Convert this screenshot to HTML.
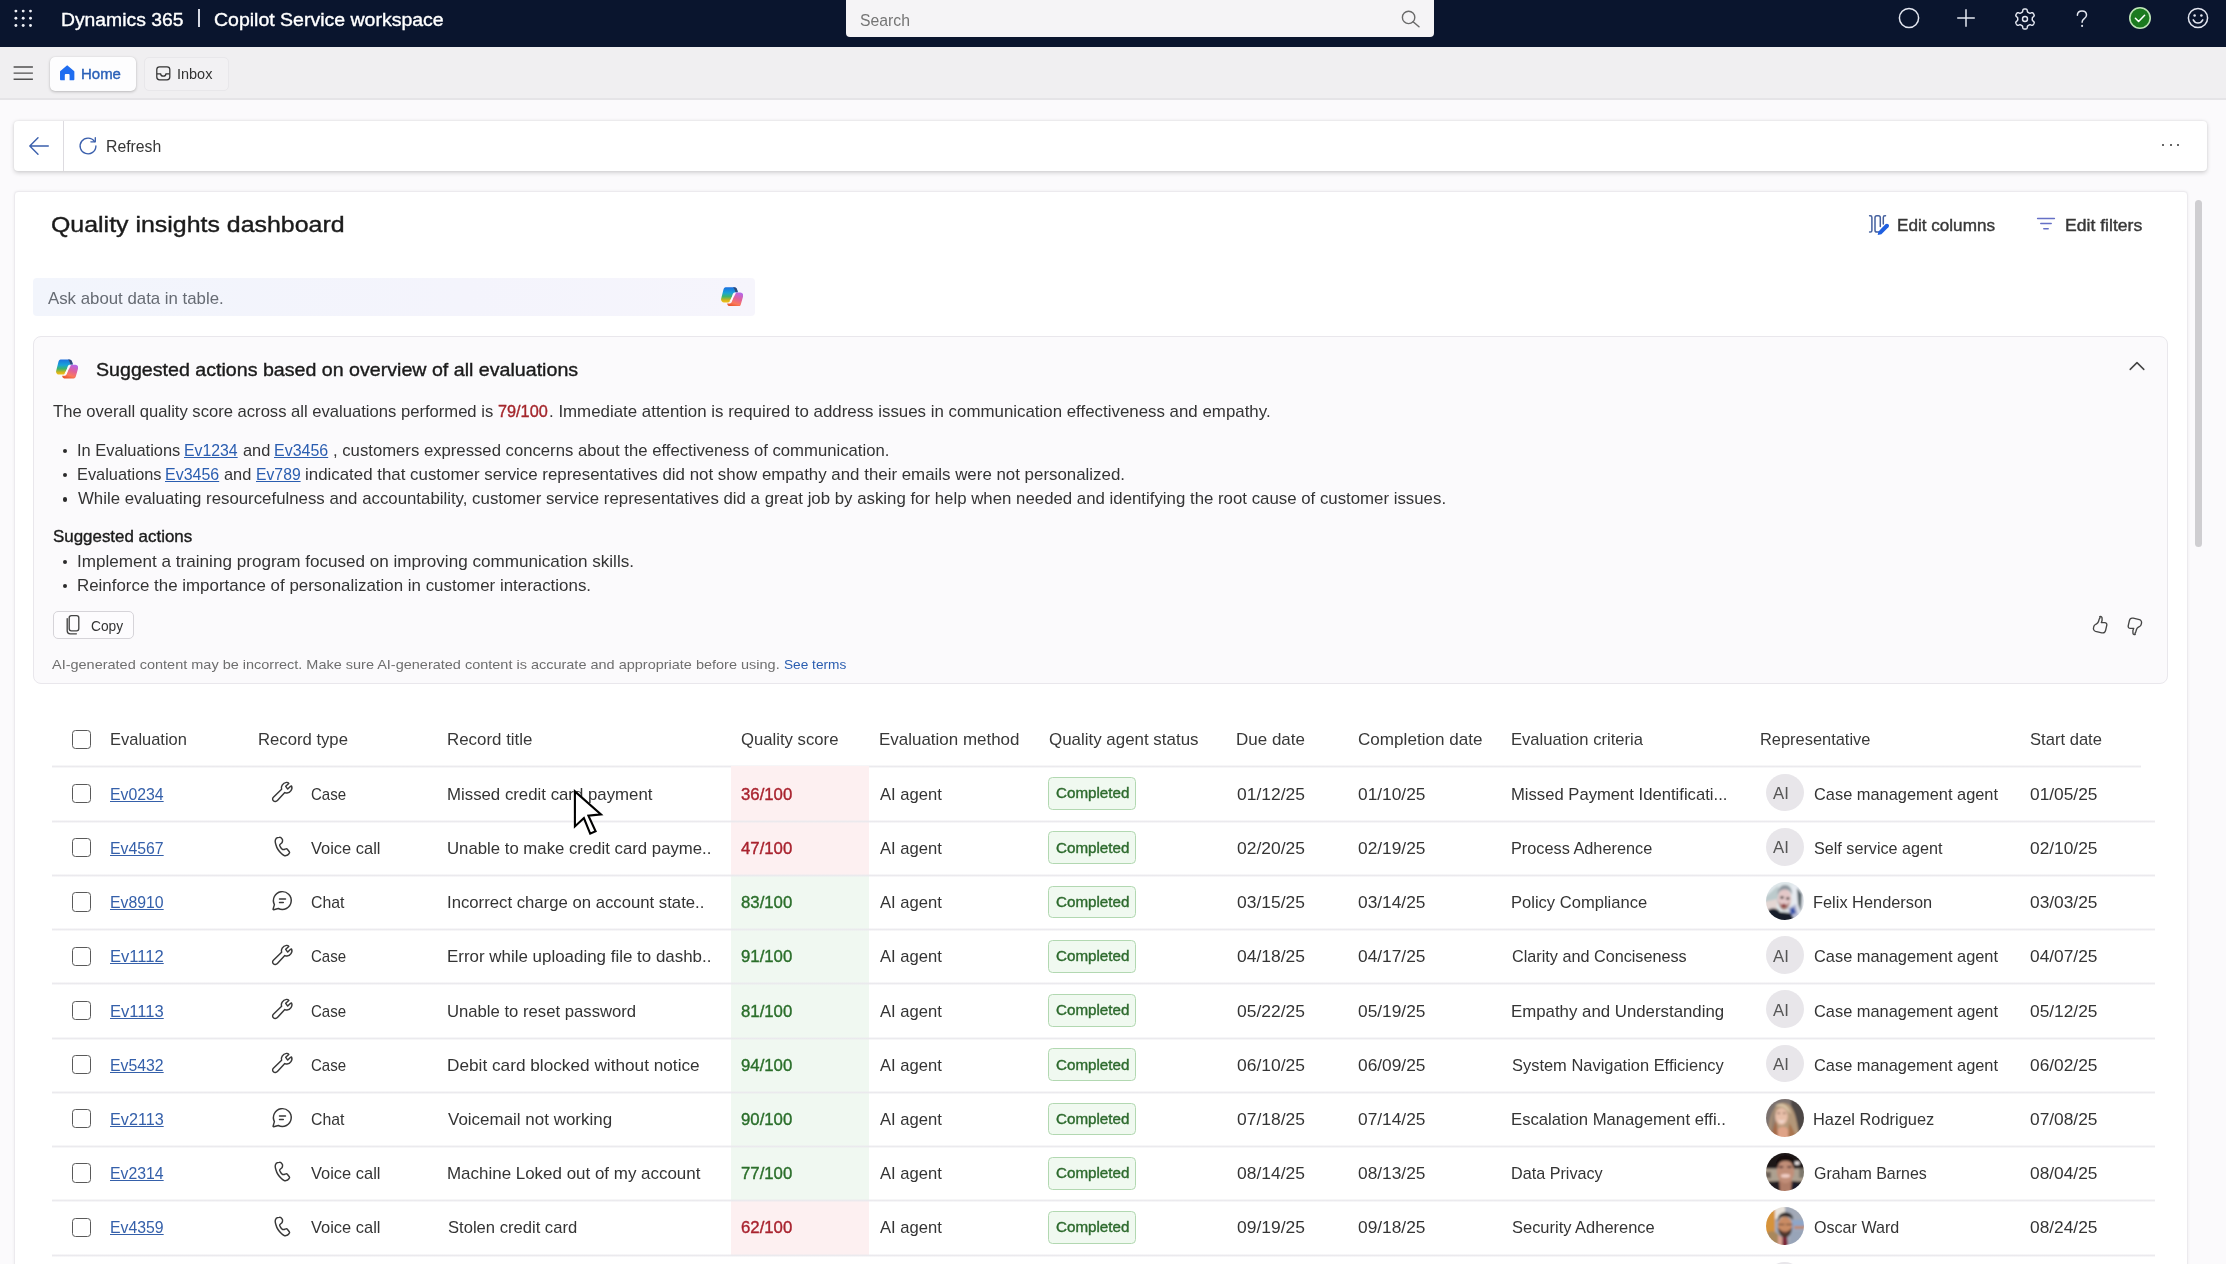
<!DOCTYPE html>
<html lang="en"><head><meta charset="utf-8"><title>Quality insights dashboard</title>
<style>
html,body{margin:0;padding:0;}
body{width:2226px;height:1264px;overflow:hidden;position:relative;background:#fbfafc;font-family:"Liberation Sans",sans-serif;}
#root{position:absolute;left:0;top:0;width:2226px;height:1264px;overflow:hidden;}
#root div,#root svg,#root span.t{position:absolute;}
span.t{white-space:pre;line-height:1;transform-origin:0 0;display:block;}
</style></head>
<body><div id="root">
<header>
<div style="left:0.00px;top:0.00px;width:2226.00px;height:47.00px;background:#0a152e;"></div>
<svg style="left:5.00px;top:0.00px" width="40.00" height="40.00" viewBox="0 0 40 40" ><circle cx="10.9" cy="11.1" r="1.45" fill="#eef0f7"/><circle cx="18.2" cy="11.1" r="1.45" fill="#eef0f7"/><circle cx="25.5" cy="11.1" r="1.45" fill="#eef0f7"/><circle cx="10.9" cy="18.3" r="1.45" fill="#eef0f7"/><circle cx="18.2" cy="18.3" r="1.45" fill="#eef0f7"/><circle cx="25.5" cy="18.3" r="1.45" fill="#eef0f7"/><circle cx="10.9" cy="25.5" r="1.45" fill="#eef0f7"/><circle cx="18.2" cy="25.5" r="1.45" fill="#eef0f7"/><circle cx="25.5" cy="25.5" r="1.45" fill="#eef0f7"/></svg>
<span class="t" style="left:61.37px;top:11.00px;font-size:18.8px;color:#ffffff;transform:scaleX(1.0285);-webkit-text-stroke:0.38px currentColor;">Dynamics 365</span>
<div style="left:198.30px;top:9.00px;width:1.60px;height:18.40px;background:#d5d9e4;"></div>
<span class="t" style="left:214.00px;top:11.00px;font-size:18.8px;color:#ffffff;transform:scaleX(1.0378);-webkit-text-stroke:0.38px currentColor;">Copilot Service workspace</span>
<div style="left:845.50px;top:0.00px;width:588.50px;height:37.40px;background:#f5f4f6;border-radius:0 0 4px 4px;"></div>
<span class="t" style="left:860.30px;top:12.00px;font-size:17.4px;color:#757575;transform:scaleX(0.9076);">Search</span>
<svg style="left:1399.50px;top:9.20px" width="21.00" height="18.60" viewBox="0 0 21 18.6" ><circle cx="8.6" cy="8.4" r="6.2" fill="none" stroke="#6a6a6a" stroke-width="1.4"/><path d="M13.100 12.800 L19 17.800" stroke="#6a6a6a" stroke-width="1.5" stroke-linecap="round"/></svg>
<svg style="left:1896.80px;top:6.40px" width="24.00" height="24.00" viewBox="0 0 24 24" ><circle cx="12" cy="12" r="9.6" fill="none" stroke="#e4e7f1" stroke-width="1.5"/></svg>
<svg style="left:1954.20px;top:5.80px" width="24.00" height="24.00" viewBox="0 0 24 24" ><path d="M12 3.3V20.7M3.2 12H20.8" stroke="#e4e7f1" stroke-width="1.5" fill="none"/></svg>
<svg style="left:2012.60px;top:6.50px" width="24.00" height="24.00" viewBox="0 0 24 24" ><path d="M12.00 2.00 L12.26 2.00 L12.52 2.02 L12.78 2.05 L13.04 2.09 L13.30 2.15 L13.54 2.25 L13.78 2.42 L13.98 2.69 L14.13 3.11 L14.24 3.64 L14.32 4.18 L14.41 4.60 L14.52 4.88 L14.66 5.06 L14.82 5.19 L14.98 5.30 L15.15 5.40 L15.32 5.49 L15.48 5.58 L15.65 5.68 L15.81 5.77 L15.98 5.87 L16.14 5.97 L16.31 6.07 L16.48 6.16 L16.68 6.22 L16.91 6.25 L17.21 6.21 L17.62 6.08 L18.12 5.88 L18.63 5.71 L19.07 5.63 L19.41 5.67 L19.67 5.79 L19.88 5.95 L20.06 6.14 L20.23 6.34 L20.38 6.56 L20.53 6.78 L20.66 7.00 L20.79 7.23 L20.90 7.46 L21.01 7.70 L21.11 7.95 L21.18 8.20 L21.21 8.46 L21.18 8.75 L21.05 9.06 L20.77 9.40 L20.36 9.76 L19.93 10.10 L19.62 10.38 L19.43 10.62 L19.34 10.84 L19.30 11.04 L19.29 11.23 L19.29 11.43 L19.30 11.62 L19.30 11.81 L19.30 12.00 L19.30 12.19 L19.30 12.38 L19.29 12.57 L19.29 12.77 L19.30 12.96 L19.34 13.16 L19.43 13.38 L19.62 13.62 L19.93 13.90 L20.36 14.24 L20.77 14.60 L21.05 14.94 L21.18 15.25 L21.21 15.54 L21.18 15.80 L21.11 16.05 L21.01 16.30 L20.90 16.54 L20.79 16.77 L20.66 17.00 L20.53 17.22 L20.38 17.44 L20.23 17.66 L20.06 17.86 L19.88 18.05 L19.67 18.21 L19.41 18.33 L19.07 18.37 L18.63 18.29 L18.12 18.12 L17.62 17.92 L17.21 17.79 L16.91 17.75 L16.68 17.78 L16.48 17.84 L16.31 17.93 L16.14 18.03 L15.98 18.13 L15.81 18.23 L15.65 18.32 L15.48 18.42 L15.32 18.51 L15.15 18.60 L14.98 18.70 L14.82 18.81 L14.66 18.94 L14.52 19.12 L14.41 19.40 L14.32 19.82 L14.24 20.36 L14.13 20.89 L13.98 21.31 L13.78 21.58 L13.54 21.75 L13.30 21.85 L13.04 21.91 L12.78 21.95 L12.52 21.98 L12.26 22.00 L12.00 22.00 L11.74 22.00 L11.48 21.98 L11.22 21.95 L10.96 21.91 L10.70 21.85 L10.46 21.75 L10.22 21.58 L10.02 21.31 L9.87 20.89 L9.76 20.36 L9.68 19.82 L9.59 19.40 L9.48 19.12 L9.34 18.94 L9.18 18.81 L9.02 18.70 L8.85 18.60 L8.68 18.51 L8.52 18.42 L8.35 18.32 L8.19 18.23 L8.02 18.13 L7.86 18.03 L7.69 17.93 L7.52 17.84 L7.32 17.78 L7.09 17.75 L6.79 17.79 L6.38 17.92 L5.88 18.12 L5.37 18.29 L4.93 18.37 L4.59 18.33 L4.33 18.21 L4.12 18.05 L3.94 17.86 L3.77 17.66 L3.62 17.44 L3.47 17.22 L3.34 17.00 L3.21 16.77 L3.10 16.54 L2.99 16.30 L2.89 16.05 L2.82 15.80 L2.79 15.54 L2.82 15.25 L2.95 14.94 L3.23 14.60 L3.64 14.24 L4.07 13.90 L4.38 13.62 L4.57 13.38 L4.66 13.16 L4.70 12.96 L4.71 12.77 L4.71 12.57 L4.70 12.38 L4.70 12.19 L4.70 12.00 L4.70 11.81 L4.70 11.62 L4.71 11.43 L4.71 11.23 L4.70 11.04 L4.66 10.84 L4.57 10.62 L4.38 10.38 L4.07 10.10 L3.64 9.76 L3.23 9.40 L2.95 9.06 L2.82 8.75 L2.79 8.46 L2.82 8.20 L2.89 7.95 L2.99 7.70 L3.10 7.46 L3.21 7.23 L3.34 7.00 L3.47 6.78 L3.62 6.56 L3.77 6.34 L3.94 6.14 L4.12 5.95 L4.33 5.79 L4.59 5.67 L4.93 5.63 L5.37 5.71 L5.88 5.88 L6.38 6.08 L6.79 6.21 L7.09 6.25 L7.32 6.22 L7.52 6.16 L7.69 6.07 L7.86 5.97 L8.02 5.87 L8.19 5.77 L8.35 5.68 L8.52 5.58 L8.68 5.49 L8.85 5.40 L9.02 5.30 L9.18 5.19 L9.34 5.06 L9.48 4.88 L9.59 4.60 L9.68 4.18 L9.76 3.64 L9.87 3.11 L10.02 2.69 L10.22 2.42 L10.46 2.25 L10.70 2.15 L10.96 2.09 L11.22 2.05 L11.48 2.02 L11.74 2.00Z" fill="none" stroke="#e4e7f1" stroke-width="1.45" stroke-linejoin="round"/><circle cx="12" cy="12" r="2.5" fill="none" stroke="#e4e7f1" stroke-width="1.45"/></svg>
<svg style="left:2070.00px;top:6.00px" width="24.00" height="24.00" viewBox="0 0 24 24" ><path d="M7.4 9.3C7.4 6.5 9.4 4.9 12 4.9s4.5 1.7 4.5 4.1c0 2-1.2 3-2.5 3.9-1.2.9-1.9 1.7-1.9 3.4" fill="none" stroke="#e4e7f1" stroke-width="1.5" stroke-linecap="round"/><circle cx="12.1" cy="19.9" r="1.05" fill="#e4e7f1"/></svg>
<svg style="left:2128.00px;top:6.40px" width="24.00" height="24.00" viewBox="0 0 24 24" ><circle cx="12" cy="12" r="10.2" fill="#1b7a1f" stroke="#bfe6b8" stroke-width="1.6"/><path d="M7.4 12.3l3.2 3.2 6-6.3" fill="none" stroke="#ffffff" stroke-width="1.55" stroke-linecap="round" stroke-linejoin="round"/></svg>
<svg style="left:2186.00px;top:6.40px" width="24.00" height="24.00" viewBox="0 0 24 24" ><circle cx="12" cy="12" r="9.6" fill="none" stroke="#e4e7f1" stroke-width="1.5"/><circle cx="8.6" cy="9.4" r="1.25" fill="#e4e7f1"/><circle cx="15.4" cy="9.4" r="1.25" fill="#e4e7f1"/><path d="M7.2 13.8c1 2 2.7 3.1 4.8 3.1s3.8-1.1 4.8-3.1" fill="none" stroke="#e4e7f1" stroke-width="1.5" stroke-linecap="round"/></svg>
</header>
<nav>
<div style="left:0.00px;top:47.00px;width:2226.00px;height:52.00px;background:#f0eff1;"></div>
<div style="left:0.00px;top:98.20px;width:2226.00px;height:1.40px;background:#e5e4e7;"></div>
<svg style="left:10.00px;top:60.00px" width="26.00" height="26.00" viewBox="0 0 26 26" ><path d="M3.600 7H22.900M3.600 13.100H22.900M3.600 19.200H22.900" stroke="#505050" stroke-width="1.45" fill="none"/></svg>
<div style="left:50.30px;top:57.00px;width:85.70px;height:34.00px;background:#fdfdfe;border-radius:5px;box-shadow:0 1px 3px rgba(0,0,0,.22),0 0 1px rgba(0,0,0,.12);"></div>
<svg style="left:57.90px;top:63.40px" width="18.40" height="19.60" viewBox="0 0 20 20" ><path d="M10 1.8 L2.6 8.1 c-.25.22-.4.53-.4.86 V17 c0 .6.5 1.1 1.1 1.1 H7.4 V12.3 c0-.5.4-.9.9-.9 h3.4 c.5 0 .9.4.9.9 V18.1 h4.1 c.6 0 1.1-.5 1.1-1.1 V8.96 c0-.33-.15-.64-.4-.86 L10 1.8Z" fill="#1f6df0"/></svg>
<span class="t" style="left:81.36px;top:67.00px;font-size:14.4px;color:#2a60b8;transform:scaleX(1.0406);-webkit-text-stroke:0.38px currentColor;">Home</span>
<div style="left:144.20px;top:57.00px;width:85.30px;height:34.00px;background:#f2f1f3;border-radius:5px;border:1px solid #e8e7ea;box-sizing:border-box;"></div>
<svg style="left:153.90px;top:64.20px" width="18.60" height="18.60" viewBox="0 0 20 20" ><rect x="3" y="3" width="14" height="14" rx="3" fill="none" stroke="#333" stroke-width="1.35"/><path d="M3.2 10.6h3.9c.2 1.5 1.4 2.5 2.9 2.5s2.7-1 2.9-2.5h3.9" fill="none" stroke="#333" stroke-width="1.35"/></svg>
<span class="t" style="left:177.02px;top:67.00px;font-size:14.8px;color:#333;transform:scaleX(0.9777);">Inbox</span>
</nav>
<main>
<section>
<div style="left:14.00px;top:120.50px;width:2192.70px;height:50.00px;background:#fff;border-radius:4px;box-shadow:0 1.5px 4px rgba(0,0,0,.16),0 0 2px rgba(0,0,0,.08);"></div>
<div style="left:63.00px;top:120.50px;width:1.30px;height:50.00px;background:#dddbe0;"></div>
<svg style="left:27.00px;top:133.60px" width="24.00" height="24.00" viewBox="0 0 24 24" ><path d="M21.300 12H2.900M11 3.800 2.800 12l8.200 8.200" fill="none" stroke="#3a5fac" stroke-width="1.4" stroke-linecap="round" stroke-linejoin="round"/></svg>
<svg style="left:77.30px;top:134.90px" width="22.00" height="22.00" viewBox="0 0 22 22" ><path d="M17.500 6.500A7.900 7.900 0 1 0 18.900 11" fill="none" stroke="#3a5fac" stroke-width="1.35" stroke-linecap="round"/><path d="M18.300 2.700V6.800H13.900" fill="none" stroke="#3a5fac" stroke-width="1.35" stroke-linecap="round" stroke-linejoin="round"/></svg>
<span class="t" style="left:106.37px;top:138.00px;font-size:17.0px;color:#363636;transform:scaleX(0.9282);">Refresh</span>
<div style="left:2162.15px;top:144.35px;width:2.10px;height:2.10px;background:#333;border-radius:50%;"></div>
<div style="left:2169.55px;top:144.35px;width:2.10px;height:2.10px;background:#333;border-radius:50%;"></div>
<div style="left:2176.95px;top:144.35px;width:2.10px;height:2.10px;background:#333;border-radius:50%;"></div>
</section>
<section>
<div style="left:13.50px;top:190.60px;width:2174.50px;height:1109.40px;background:#fff;border:1px solid #eceaee;border-radius:4px;box-sizing:border-box;box-shadow:0 0 3px rgba(0,0,0,.06);"></div>
<div style="left:2194.60px;top:199.70px;width:7.20px;height:347.80px;background:#cfced1;border-radius:4px;"></div>
<span class="t" style="left:51.47px;top:214.00px;font-size:22.0px;color:#1b1b1b;transform:scaleX(1.1322);-webkit-text-stroke:0.38px currentColor;">Quality insights dashboard</span>
<svg style="left:1867.00px;top:213.00px" width="24.00" height="24.00" viewBox="0 0 24 24" >
<g transform="translate(2.2 2.1)" fill="none" stroke="#44609e" stroke-width="1.5" stroke-linecap="round">
<path d="M.4 .7h.7c1 0 1.600.6 1.600 1.600v13.000c0 1-.6 1.600-1.600 1.600h-.7"/>
<path d="M9.300 17h-1.600c-1.100 0-1.900-.8-1.900-1.900V2.600c0-1.100.8-1.900 1.900-1.900h1.500c1.100 0 1.900.8 1.900 1.900V11.500"/>
<path d="M16.300 .7h-.6c-1 0-1.600.6-1.600 1.600V9"/>
</g>
<path d="M18.400 11.300c.8-.8 2.200-.8 3 0s.8 2.200 0 3l-7 7-3.700.8.800-3.700z" fill="#1f5fe0"/>
</svg>
<span class="t" style="left:1896.60px;top:218.00px;font-size:15.6px;color:#383838;transform:scaleX(1.0975);-webkit-text-stroke:0.38px currentColor;">Edit columns</span>
<svg style="left:2034.00px;top:212.00px" width="24.00" height="24.00" viewBox="0 0 24 24" ><path d="M3.600 6.400H20.400M6.800 11.600H17.200M9.800 16.800H14.200" stroke="#6670c6" stroke-width="1.5" stroke-linecap="round" fill="none"/></svg>
<span class="t" style="left:2065.17px;top:218.00px;font-size:15.6px;color:#383838;transform:scaleX(1.1277);-webkit-text-stroke:0.38px currentColor;">Edit filters</span>
<div style="left:32.80px;top:278.00px;width:722.50px;height:38.40px;background:linear-gradient(90deg,#f2f5fc 0%,#f4f4fc 60%,#f6f5fc 100%);border-radius:4px;"></div>
<span class="t" style="left:47.80px;top:290.00px;font-size:17.0px;color:#666b73;transform:scaleX(0.9890);">Ask about data in table.</span>
<svg style="left:721.00px;top:286.70px" width="22.30" height="19.60" viewBox="0 0 22.3 19.6" >
<defs>
<linearGradient id="cgA1" x1="0" y1="0" x2="0" y2="1"><stop offset="0" stop-color="#1b6fe0"/><stop offset="0.38" stop-color="#19a3d8"/><stop offset="0.62" stop-color="#3fb56b"/><stop offset="0.85" stop-color="#d3b31a"/><stop offset="1" stop-color="#f2c21a"/></linearGradient>
<linearGradient id="cgB1" x1="0.7" y1="0" x2="0.3" y2="1"><stop offset="0" stop-color="#b667e8"/><stop offset="0.4" stop-color="#e0609a"/><stop offset="0.75" stop-color="#fb7a5c"/><stop offset="1" stop-color="#e8552a"/></linearGradient>
</defs>
<path d="M4.600 .2H13.200C14.600 .2 15.600 1 16 2.300L16.900 5.200H14.600C13.200 5.200 12.100 6 11.700 7.300L9.700 13.300C9.300 14.600 8.200 15.400 6.900 15.400H3C1 15.400-.4 13.500 .2 11.600L2.400 2.800C2.800 1.200 3.500 .2 4.600 .2Z" fill="url(#cgA1)"/>
<path d="M12 .2H13.200C14.600 .2 15.600 1 16 2.300L16.900 5.200H14.400C14 3.300 13.300 1.400 12 .2Z" fill="#33456e" opacity=".92"/>
<path d="M17.600 19.400H9.200C7.800 19.400 6.700 18.600 6.300 17.300L6.100 16.600H8.100C9.400 16.600 10.500 15.800 10.900 14.500L12.900 7.600C13.300 6.300 14.400 5.500 15.700 5.500H19.300C21.300 5.500 22.700 7.400 22.100 9.300L19.800 17.400C19.400 18.600 18.700 19.400 17.600 19.400Z" fill="url(#cgB1)"/>
<path d="M13.300 6.100 15 5.700 10.700 14.200 8.300 14.500z" fill="#fff" opacity=".92"/>
</svg>
</section>
<section>
<div style="left:33.00px;top:335.60px;width:2134.80px;height:348.00px;background:#fbfafc;border:1px solid #e9e7ec;border-radius:8px;box-sizing:border-box;"></div>
<svg style="left:55.50px;top:358.80px" width="22.30" height="20.00" viewBox="0 0 22.3 19.6" >
<defs>
<linearGradient id="cgA2" x1="0" y1="0" x2="0" y2="1"><stop offset="0" stop-color="#1b6fe0"/><stop offset="0.38" stop-color="#19a3d8"/><stop offset="0.62" stop-color="#3fb56b"/><stop offset="0.85" stop-color="#d3b31a"/><stop offset="1" stop-color="#f2c21a"/></linearGradient>
<linearGradient id="cgB2" x1="0.7" y1="0" x2="0.3" y2="1"><stop offset="0" stop-color="#b667e8"/><stop offset="0.4" stop-color="#e0609a"/><stop offset="0.75" stop-color="#fb7a5c"/><stop offset="1" stop-color="#e8552a"/></linearGradient>
</defs>
<path d="M4.600 .2H13.200C14.600 .2 15.600 1 16 2.300L16.900 5.200H14.600C13.200 5.200 12.100 6 11.700 7.300L9.700 13.300C9.300 14.600 8.200 15.400 6.900 15.400H3C1 15.400-.4 13.500 .2 11.600L2.400 2.800C2.800 1.200 3.500 .2 4.600 .2Z" fill="url(#cgA2)"/>
<path d="M12 .2H13.200C14.600 .2 15.600 1 16 2.300L16.900 5.200H14.400C14 3.300 13.300 1.400 12 .2Z" fill="#33456e" opacity=".92"/>
<path d="M17.600 19.400H9.200C7.800 19.400 6.700 18.600 6.300 17.300L6.100 16.600H8.100C9.400 16.600 10.500 15.800 10.900 14.500L12.900 7.600C13.300 6.300 14.400 5.500 15.700 5.500H19.300C21.300 5.500 22.700 7.400 22.100 9.300L19.800 17.400C19.400 18.600 18.700 19.400 17.600 19.400Z" fill="url(#cgB2)"/>
<path d="M13.300 6.100 15 5.700 10.700 14.200 8.300 14.500z" fill="#fff" opacity=".92"/>
</svg>
<span class="t" style="left:96.00px;top:361.00px;font-size:18.4px;color:#1b1b1b;transform:scaleX(1.0669);-webkit-text-stroke:0.38px currentColor;">Suggested actions based on overview of all evaluations</span>
<svg style="left:2126.50px;top:356.00px" width="20.00" height="20.00" viewBox="0 0 20 20" ><path d="M3.2 13.4 10 6.6l6.800 6.800" fill="none" stroke="#444" stroke-width="1.5" stroke-linecap="round" stroke-linejoin="round"/></svg>
<span class="t" style="left:53.10px;top:403.00px;font-size:17.0px;color:#343434;transform:scaleX(0.9767);">The overall quality score across all evaluations performed is</span>
<span class="t" style="left:498.40px;top:403.00px;font-size:17.0px;color:#a4262c;transform:scaleX(0.9565);-webkit-text-stroke:0.38px currentColor;">79/100</span>
<span class="t" style="left:548.61px;top:403.00px;font-size:17.0px;color:#343434;transform:scaleX(0.9926);">. Immediate attention is required to address issues in communication effectiveness and empathy.</span>
<div style="left:62.50px;top:449.10px;width:4.40px;height:4.40px;background:#2b2b2b;border-radius:50%;"></div>
<span class="t" style="left:77.23px;top:442.00px;font-size:17.0px;color:#343434;transform:scaleX(0.9678);">In Evaluations</span>
<span class="t" style="left:184.27px;top:442.00px;font-size:17.0px;color:#2a5db0;transform:scaleX(0.9306);text-decoration:underline;text-decoration-thickness:1.1px;text-underline-offset:1.4px;">Ev1234</span>
<span class="t" style="left:242.80px;top:442.00px;font-size:17.0px;color:#343434;transform:scaleX(0.9638);">and</span>
<span class="t" style="left:274.26px;top:442.00px;font-size:17.0px;color:#2a5db0;transform:scaleX(0.9395);text-decoration:underline;text-decoration-thickness:1.1px;text-underline-offset:1.4px;">Ev3456</span>
<span class="t" style="left:332.82px;top:442.00px;font-size:17.0px;color:#343434;transform:scaleX(0.9819);">, customers expressed concerns about the effectiveness of communication.</span>
<div style="left:62.50px;top:473.10px;width:4.40px;height:4.40px;background:#2b2b2b;border-radius:50%;"></div>
<span class="t" style="left:77.24px;top:466.00px;font-size:17.0px;color:#343434;transform:scaleX(0.9619);">Evaluations</span>
<span class="t" style="left:165.36px;top:466.00px;font-size:17.0px;color:#2a5db0;transform:scaleX(0.9395);text-decoration:underline;text-decoration-thickness:1.1px;text-underline-offset:1.4px;">Ev3456</span>
<span class="t" style="left:224.40px;top:466.00px;font-size:17.0px;color:#343434;transform:scaleX(0.9638);">and</span>
<span class="t" style="left:255.67px;top:466.00px;font-size:17.0px;color:#2a5db0;transform:scaleX(0.9262);text-decoration:underline;text-decoration-thickness:1.1px;text-underline-offset:1.4px;">Ev789</span>
<span class="t" style="left:304.71px;top:466.00px;font-size:17.0px;color:#343434;transform:scaleX(0.9929);">indicated that customer service representatives did not show empathy and their emails were not personalized.</span>
<div style="left:62.50px;top:497.20px;width:4.40px;height:4.40px;background:#2b2b2b;border-radius:50%;"></div>
<span class="t" style="left:78.20px;top:490.00px;font-size:17.0px;color:#343434;transform:scaleX(0.9891);">While evaluating resourcefulness and accountability, customer service representatives did a great job by asking for help when needed and identifying the root cause of customer issues.</span>
<span class="t" style="left:52.80px;top:528.00px;font-size:17.0px;color:#1b1b1b;transform:scaleX(0.9951);-webkit-text-stroke:0.38px currentColor;">Suggested actions</span>
<div style="left:62.50px;top:559.60px;width:4.40px;height:4.40px;background:#2b2b2b;border-radius:50%;"></div>
<span class="t" style="left:77.19px;top:553.00px;font-size:17.0px;color:#343434;transform:scaleX(1.0060);">Implement a training program focused on improving communication skills.</span>
<div style="left:62.50px;top:583.60px;width:4.40px;height:4.40px;background:#2b2b2b;border-radius:50%;"></div>
<span class="t" style="left:77.21px;top:577.00px;font-size:17.0px;color:#343434;transform:scaleX(0.9945);">Reinforce the importance of personalization in customer interactions.</span>
<div style="left:52.60px;top:610.80px;width:81.30px;height:28.40px;background:#fdfcfe;border:1px solid #d6d4d9;border-radius:5px;box-sizing:border-box;"></div>
<svg style="left:64.00px;top:614.00px" width="20.00" height="22.00" viewBox="0 0 20 22" ><rect x="5.2" y="1.6" width="9.6" height="15.2" rx="2.2" fill="none" stroke="#444" stroke-width="1.35"/><path d="M3.2 4.6v12.2c0 1.7 1.300 3 3 3h6.2" fill="none" stroke="#444" stroke-width="1.35" stroke-linecap="round"/></svg>
<span class="t" style="left:91.00px;top:619.00px;font-size:14.6px;color:#333;transform:scaleX(0.9433);">Copy</span>
<span class="t" style="left:52.40px;top:658.00px;font-size:13.6px;color:#6e6e6e;transform:scaleX(1.0652);">AI-generated content may be incorrect. Make sure AI-generated content is accurate and appropriate before using.</span>
<span class="t" style="left:784.00px;top:658.00px;font-size:13.6px;color:#2a5db0;transform:scaleX(1.0056);">See terms</span>
<svg style="left:2091.00px;top:615.00px" width="19.00" height="20.00" viewBox="0 0 19 20" ><path d="M8.8 1.6c.9-.5 2 .1 2.200 1.100l.1 1.300c.1 1-.1 2-.5 2.900l-.300.700h3.500c1.300 0 2.300 1.200 2 2.500l-1.200 5.300c-.4 1.700-2.100 2.800-3.800 2.400l-6.200-1.500c-1.500-.4-2.500-1.900-2.100-3.400l.3-1.300c.2-.9.800-1.700 1.600-2.100l1.200-.7c.9-.5 1.600-1.300 1.900-2.300l.7-2.400c.1-.5.400-.900.800-1.100Z" fill="none" stroke="#444" stroke-width="1.35" stroke-linejoin="round"/></svg>
<svg style="left:2125.00px;top:615.50px" width="19.00" height="20.00" viewBox="0 0 19 20" ><g transform="rotate(180 9.5 10)"><path d="M8.8 1.6c.9-.5 2 .1 2.200 1.100l.1 1.300c.1 1-.1 2-.5 2.900l-.300.700h3.500c1.300 0 2.300 1.200 2 2.500l-1.200 5.300c-.4 1.700-2.100 2.800-3.800 2.400l-6.200-1.500c-1.500-.4-2.500-1.900-2.100-3.400l.3-1.300c.2-.9.800-1.700 1.600-2.100l1.200-.7c.9-.5 1.600-1.300 1.900-2.300l.7-2.400c.1-.5.400-.900.800-1.100Z" fill="none" stroke="#444" stroke-width="1.35" stroke-linejoin="round"/></g></svg>
</section>
<section>
<div style="left:71.60px;top:729.70px;width:19.20px;height:19.20px;border:1.5px solid #5a5a5a;border-radius:3.5px;box-sizing:border-box;background:#fff;"></div>
<span class="t" style="left:109.53px;top:731.00px;font-size:17.0px;color:#383838;transform:scaleX(0.9688);">Evaluation</span>
<span class="t" style="left:257.52px;top:731.00px;font-size:17.0px;color:#383838;transform:scaleX(0.9811);">Record type</span>
<span class="t" style="left:447.01px;top:731.00px;font-size:17.0px;color:#383838;transform:scaleX(0.9938);">Record title</span>
<span class="t" style="left:740.50px;top:731.00px;font-size:17.0px;color:#383838;transform:scaleX(0.9823);">Quality score</span>
<span class="t" style="left:878.50px;top:731.00px;font-size:17.0px;color:#383838;transform:scaleX(0.9974);">Evaluation method</span>
<span class="t" style="left:1048.50px;top:731.00px;font-size:17.0px;color:#383838;transform:scaleX(0.9950);">Quality agent status</span>
<span class="t" style="left:1236.00px;top:731.00px;font-size:17.0px;color:#383838;transform:scaleX(0.9994);">Due date</span>
<span class="t" style="left:1358.00px;top:731.00px;font-size:17.0px;color:#383838;transform:scaleX(1.0053);">Completion date</span>
<span class="t" style="left:1511.02px;top:731.00px;font-size:17.0px;color:#383838;transform:scaleX(0.9765);">Evaluation criteria</span>
<span class="t" style="left:1760.03px;top:731.00px;font-size:17.0px;color:#383838;transform:scaleX(0.9656);">Representative</span>
<span class="t" style="left:2029.50px;top:731.00px;font-size:17.0px;color:#383838;transform:scaleX(0.9760);">Start date</span>
<div style="left:52.00px;top:765.00px;width:2088.50px;height:3.00px;background:linear-gradient(rgba(234,233,237,0),rgba(234,233,237,.95) 38%,rgba(234,233,237,.95) 62%,rgba(234,233,237,0));"></div>
<div style="left:731.00px;top:766.39px;width:137.50px;height:54.72px;background:#fdf0f1;"></div>
<div style="left:731.00px;top:820.61px;width:137.50px;height:54.72px;background:#fdf0f1;"></div>
<div style="left:731.00px;top:874.83px;width:137.50px;height:54.72px;background:#f0f8f1;"></div>
<div style="left:731.00px;top:929.05px;width:137.50px;height:54.72px;background:#f0f8f1;"></div>
<div style="left:731.00px;top:983.27px;width:137.50px;height:54.72px;background:#f0f8f1;"></div>
<div style="left:731.00px;top:1037.49px;width:137.50px;height:54.72px;background:#f0f8f1;"></div>
<div style="left:731.00px;top:1091.71px;width:137.50px;height:54.72px;background:#f0f8f1;"></div>
<div style="left:731.00px;top:1145.93px;width:137.50px;height:54.72px;background:#f0f8f1;"></div>
<div style="left:731.00px;top:1200.15px;width:137.50px;height:54.72px;background:#fdf0f1;"></div>
<article>
<div style="left:71.60px;top:783.90px;width:19.20px;height:19.20px;border:1.5px solid #5a5a5a;border-radius:3.5px;box-sizing:border-box;background:#fff;"></div>
<span class="t" style="left:109.57px;top:786.00px;font-size:17.0px;color:#3560aa;transform:scaleX(0.9306);text-decoration:underline;text-decoration-thickness:1.1px;text-underline-offset:1.4px;">Ev0234</span>
<svg style="left:262.00px;top:775.00px" width="40.00" height="36.00" viewBox="0 0 40 36" ><path d="M24.500 7.400C25.400 7.300 26.300 7.700 26.800 8.500L23.700 11.300L25.700 14.100L28.600 11.300L29.400 10.900C30.200 12.200 30.100 14 29 15.700C27.600 17.800 25 18.500 22.800 17.600L15.400 25.600C14.300 26.800 12.500 26.900 11.400 25.800C10.300 24.700 10.400 23.300 11.400 22.300L19.600 14.300C18.700 11.600 20.500 8 24.500 7.400Z" fill="none" stroke="#383838" stroke-width="1.45" stroke-linejoin="round" stroke-linecap="round"/></svg>
<span class="t" style="left:311.30px;top:786.00px;font-size:17.0px;color:#343434;transform:scaleX(0.8845);">Case</span>
<span class="t" style="left:447.31px;top:786.00px;font-size:17.0px;color:#343434;transform:scaleX(0.9882);">Missed credit card payment</span>
<span class="t" style="left:740.80px;top:786.00px;font-size:17.0px;color:#a8222e;transform:scaleX(0.9856);-webkit-text-stroke:0.38px currentColor;">36/100</span>
<span class="t" style="left:879.70px;top:786.00px;font-size:17.0px;color:#343434;transform:scaleX(0.9764);">AI agent</span>
<div style="left:1048.10px;top:777.20px;width:87.60px;height:32.80px;background:#f0f9f0;border:1.3px solid #b2d8b1;border-radius:4.5px;box-sizing:border-box;"></div>
<span class="t" style="left:1055.60px;top:787.00px;font-size:13.8px;color:#2d6a2d;transform:scaleX(1.0992);-webkit-text-stroke:0.38px currentColor;">Completed</span>
<span class="t" style="left:1237.00px;top:786.00px;font-size:17.0px;color:#343434;transform:scaleX(1.0271);">01/12/25</span>
<span class="t" style="left:1358.00px;top:786.00px;font-size:17.0px;color:#343434;transform:scaleX(1.0195);">01/10/25</span>
<span class="t" style="left:1511.32px;top:786.00px;font-size:17.0px;color:#343434;transform:scaleX(0.9787);">Missed Payment Identificati...</span>
<div style="left:1765.80px;top:773.60px;width:37.80px;height:37.80px;background:#e8e6ea;border-radius:50%;"></div>
<span class="t" style="left:1773.30px;top:785.00px;font-size:17.0px;color:#565656;transform:scaleX(0.9844);">AI</span>
<span class="t" style="left:1814.20px;top:786.00px;font-size:17.0px;color:#343434;transform:scaleX(0.9640);">Case management agent</span>
<span class="t" style="left:2029.50px;top:786.00px;font-size:17.0px;color:#343434;transform:scaleX(1.0195);">01/05/25</span>
<div style="left:52.00px;top:819.50px;width:2102.50px;height:3.00px;background:linear-gradient(rgba(234,233,237,0),rgba(234,233,237,.95) 38%,rgba(234,233,237,.95) 62%,rgba(234,233,237,0));"></div>
</article>
<article>
<div style="left:71.60px;top:838.12px;width:19.20px;height:19.20px;border:1.5px solid #5a5a5a;border-radius:3.5px;box-sizing:border-box;background:#fff;"></div>
<span class="t" style="left:109.57px;top:840.00px;font-size:17.0px;color:#3560aa;transform:scaleX(0.9306);text-decoration:underline;text-decoration-thickness:1.1px;text-underline-offset:1.4px;">Ev4567</span>
<svg style="left:262.00px;top:829.00px" width="40.00" height="36.00" viewBox="0 0 40 36" ><path d="M17.400 8.300C18.400 8.200 19.300 8.700 19.700 9.500C20.500 10.300 20.900 11.200 20.500 12.100C20.400 13 20 13.600 19.700 14L17.900 15.500C17.500 15.900 17.600 16.700 18.200 17.700C18.700 18.600 19.300 19.400 19.900 19.900C20.500 20.500 21.300 20.700 22.200 20.500L23.700 19.900C24.300 19.600 24.900 19.700 25.300 20.200L27.300 22.700C27.700 23.200 27.600 24 27.100 24.500C26.500 25.300 25.900 25.900 25.100 26.200C24.100 26.700 23.100 26.800 22.200 26.500C21.200 26.100 20.200 25.400 19.400 24.500C18 23.200 16.900 21.900 16 20.500C15.100 19.100 14.400 17.600 14 16C13.500 14.700 13.200 13.500 13.200 12.300C13.200 11.200 13.500 10.200 14.200 9.400C15 8.700 16.100 8.400 17.400 8.300Z" fill="none" stroke="#383838" stroke-width="1.45" stroke-linejoin="round" stroke-linecap="round"/></svg>
<span class="t" style="left:311.30px;top:840.00px;font-size:17.0px;color:#343434;transform:scaleX(0.9670);">Voice call</span>
<span class="t" style="left:447.31px;top:840.00px;font-size:17.0px;color:#343434;transform:scaleX(0.9853);">Unable to make credit card payme..</span>
<span class="t" style="left:740.80px;top:840.00px;font-size:17.0px;color:#a8222e;transform:scaleX(0.9856);-webkit-text-stroke:0.38px currentColor;">47/100</span>
<span class="t" style="left:879.70px;top:840.00px;font-size:17.0px;color:#343434;transform:scaleX(0.9764);">AI agent</span>
<div style="left:1048.10px;top:831.42px;width:87.60px;height:32.80px;background:#f0f9f0;border:1.3px solid #b2d8b1;border-radius:4.5px;box-sizing:border-box;"></div>
<span class="t" style="left:1055.60px;top:842.00px;font-size:13.8px;color:#2d6a2d;transform:scaleX(1.0992);-webkit-text-stroke:0.38px currentColor;">Completed</span>
<span class="t" style="left:1237.00px;top:840.00px;font-size:17.0px;color:#343434;transform:scaleX(1.0271);">02/20/25</span>
<span class="t" style="left:1358.00px;top:840.00px;font-size:17.0px;color:#343434;transform:scaleX(1.0195);">02/19/25</span>
<span class="t" style="left:1511.34px;top:840.00px;font-size:17.0px;color:#343434;transform:scaleX(0.9578);">Process Adherence</span>
<div style="left:1765.80px;top:827.82px;width:37.80px;height:37.80px;background:#e8e6ea;border-radius:50%;"></div>
<span class="t" style="left:1773.30px;top:839.00px;font-size:17.0px;color:#565656;transform:scaleX(0.9844);">AI</span>
<span class="t" style="left:1814.20px;top:840.00px;font-size:17.0px;color:#343434;transform:scaleX(0.9512);">Self service agent</span>
<span class="t" style="left:2029.50px;top:840.00px;font-size:17.0px;color:#343434;transform:scaleX(1.0195);">02/10/25</span>
<div style="left:52.00px;top:873.50px;width:2102.50px;height:3.00px;background:linear-gradient(rgba(234,233,237,0),rgba(234,233,237,.95) 38%,rgba(234,233,237,.95) 62%,rgba(234,233,237,0));"></div>
</article>
<article>
<div style="left:71.60px;top:892.34px;width:19.20px;height:19.20px;border:1.5px solid #5a5a5a;border-radius:3.5px;box-sizing:border-box;background:#fff;"></div>
<span class="t" style="left:109.57px;top:894.00px;font-size:17.0px;color:#3560aa;transform:scaleX(0.9306);text-decoration:underline;text-decoration-thickness:1.1px;text-underline-offset:1.4px;">Ev8910</span>
<svg style="left:262.00px;top:883.00px" width="40.00" height="36.00" viewBox="0 0 40 36" ><path d="M12.400 21.600A8.900 8.900 0 1 1 16.300 25.500L11.700 26.700C11.300 26.800 11 26.500 11.100 26.100Z" fill="none" stroke="#383838" stroke-width="1.45" stroke-linejoin="round" stroke-linecap="round"/><path d="M17.500 16H23.500M17.500 19.500H21.300" fill="none" stroke="#383838" stroke-width="1.45" stroke-linejoin="round" stroke-linecap="round"/></svg>
<span class="t" style="left:311.30px;top:894.00px;font-size:17.0px;color:#343434;transform:scaleX(0.9313);">Chat</span>
<span class="t" style="left:447.32px;top:894.00px;font-size:17.0px;color:#343434;transform:scaleX(0.9833);">Incorrect charge on account state..</span>
<span class="t" style="left:740.80px;top:894.00px;font-size:17.0px;color:#2a6e2a;transform:scaleX(0.9856);-webkit-text-stroke:0.38px currentColor;">83/100</span>
<span class="t" style="left:879.70px;top:894.00px;font-size:17.0px;color:#343434;transform:scaleX(0.9764);">AI agent</span>
<div style="left:1048.10px;top:885.64px;width:87.60px;height:32.80px;background:#f0f9f0;border:1.3px solid #b2d8b1;border-radius:4.5px;box-sizing:border-box;"></div>
<span class="t" style="left:1055.60px;top:896.00px;font-size:13.8px;color:#2d6a2d;transform:scaleX(1.0992);-webkit-text-stroke:0.38px currentColor;">Completed</span>
<span class="t" style="left:1237.00px;top:894.00px;font-size:17.0px;color:#343434;transform:scaleX(1.0271);">03/15/25</span>
<span class="t" style="left:1358.00px;top:894.00px;font-size:17.0px;color:#343434;transform:scaleX(1.0195);">03/14/25</span>
<span class="t" style="left:1511.33px;top:894.00px;font-size:17.0px;color:#343434;transform:scaleX(0.9734);">Policy Compliance</span>
<svg style="left:1765.60px;top:882.04px" width="38.00" height="38.00" viewBox="0 0 38 38" ><defs><clipPath id="av2"><circle cx="19" cy="19" r="19"/></clipPath><filter id="bl2" x="-10%" y="-10%" width="120%" height="120%"><feGaussianBlur stdDeviation="0.9"/></filter></defs><g clip-path="url(#av2)"><g filter="url(#bl2)"><rect x="-4" y="-4" width="46" height="46" fill="#dfe7ea"/>
<path d="M-2 16 L12 4 L14 20 L-2 26Z" fill="#bccacc"/>
<path d="M-2 20 L11 17 L11 27 L-2 30Z" fill="#e3d6d3"/>
<rect x="26" y="2" width="14" height="30" fill="#e6eaf0"/>
<path d="M31 6 L36 12 L35 30 L32 22Z" fill="#59656c"/>
<path d="M22 26 L30 22 L33 34 L24 38Z" fill="#b9bdd6"/>
<path d="M-2 40 L2 28 C8 25 12 27 14 30 L24 31 L30 40Z" fill="#171c29"/>
<path d="M24 27 l4 -2 l2 6 l-5 2z" fill="#3a55a8"/>
<ellipse cx="18.500" cy="17" rx="6.900" ry="10" fill="#e4c8c8"/>
<path d="M11.500 13c0-7 4-10 7.500-10s7.500 3 7 10c-1.500-4-3.500-5.500-7-5.500s-6 1.500-7.500 5.500z" fill="#8f979f"/>
<ellipse cx="16" cy="15.500" rx="1.800" ry="1.200" fill="#3e3536"/><ellipse cx="21.800" cy="16.500" rx="1.800" ry="1.200" fill="#3e3536"/>
<path d="M12.500 19c.5 5 2.500 9 5.500 9s5-3 5.500-8c-2 2.500-3.500 3.500-5.500 3.500s-4-1.500-5.500-4.500z" fill="#a98078"/>
<ellipse cx="17.800" cy="23.500" rx="2.300" ry="1.700" fill="#8a2f33"/></g></g></svg>
<span class="t" style="left:1813.24px;top:894.00px;font-size:17.0px;color:#343434;transform:scaleX(0.9630);">Felix Henderson</span>
<span class="t" style="left:2029.50px;top:894.00px;font-size:17.0px;color:#343434;transform:scaleX(1.0195);">03/03/25</span>
<div style="left:52.00px;top:927.50px;width:2102.50px;height:3.00px;background:linear-gradient(rgba(234,233,237,0),rgba(234,233,237,.95) 38%,rgba(234,233,237,.95) 62%,rgba(234,233,237,0));"></div>
</article>
<article>
<div style="left:71.60px;top:946.56px;width:19.20px;height:19.20px;border:1.5px solid #5a5a5a;border-radius:3.5px;box-sizing:border-box;background:#fff;"></div>
<span class="t" style="left:109.53px;top:948.00px;font-size:17.0px;color:#3560aa;transform:scaleX(0.9743);text-decoration:underline;text-decoration-thickness:1.1px;text-underline-offset:1.4px;">Ev1112</span>
<svg style="left:262.00px;top:937.66px" width="40.00" height="36.00" viewBox="0 0 40 36" ><path d="M24.500 7.400C25.400 7.300 26.300 7.700 26.800 8.500L23.700 11.300L25.700 14.100L28.600 11.300L29.400 10.900C30.200 12.200 30.100 14 29 15.700C27.600 17.800 25 18.500 22.800 17.600L15.400 25.600C14.300 26.800 12.500 26.900 11.400 25.800C10.300 24.700 10.400 23.300 11.400 22.300L19.600 14.300C18.700 11.600 20.500 8 24.500 7.400Z" fill="none" stroke="#383838" stroke-width="1.45" stroke-linejoin="round" stroke-linecap="round"/></svg>
<span class="t" style="left:311.30px;top:948.00px;font-size:17.0px;color:#343434;transform:scaleX(0.8845);">Case</span>
<span class="t" style="left:447.30px;top:948.00px;font-size:17.0px;color:#343434;transform:scaleX(0.9958);">Error while uploading file to dashb..</span>
<span class="t" style="left:740.80px;top:948.00px;font-size:17.0px;color:#2a6e2a;transform:scaleX(0.9856);-webkit-text-stroke:0.38px currentColor;">91/100</span>
<span class="t" style="left:879.70px;top:948.00px;font-size:17.0px;color:#343434;transform:scaleX(0.9764);">AI agent</span>
<div style="left:1048.10px;top:939.86px;width:87.60px;height:32.80px;background:#f0f9f0;border:1.3px solid #b2d8b1;border-radius:4.5px;box-sizing:border-box;"></div>
<span class="t" style="left:1055.60px;top:950.00px;font-size:13.8px;color:#2d6a2d;transform:scaleX(1.0992);-webkit-text-stroke:0.38px currentColor;">Completed</span>
<span class="t" style="left:1237.00px;top:948.00px;font-size:17.0px;color:#343434;transform:scaleX(1.0271);">04/18/25</span>
<span class="t" style="left:1358.00px;top:948.00px;font-size:17.0px;color:#343434;transform:scaleX(1.0195);">04/17/25</span>
<span class="t" style="left:1512.30px;top:948.00px;font-size:17.0px;color:#343434;transform:scaleX(0.9529);">Clarity and Conciseness</span>
<div style="left:1765.80px;top:936.26px;width:37.80px;height:37.80px;background:#e8e6ea;border-radius:50%;"></div>
<span class="t" style="left:1773.30px;top:948.00px;font-size:17.0px;color:#565656;transform:scaleX(0.9844);">AI</span>
<span class="t" style="left:1814.20px;top:948.00px;font-size:17.0px;color:#343434;transform:scaleX(0.9640);">Case management agent</span>
<span class="t" style="left:2029.50px;top:948.00px;font-size:17.0px;color:#343434;transform:scaleX(1.0195);">04/07/25</span>
<div style="left:52.00px;top:981.50px;width:2102.50px;height:3.00px;background:linear-gradient(rgba(234,233,237,0),rgba(234,233,237,.95) 38%,rgba(234,233,237,.95) 62%,rgba(234,233,237,0));"></div>
</article>
<article>
<div style="left:71.60px;top:1000.78px;width:19.20px;height:19.20px;border:1.5px solid #5a5a5a;border-radius:3.5px;box-sizing:border-box;background:#fff;"></div>
<span class="t" style="left:109.53px;top:1003.00px;font-size:17.0px;color:#3560aa;transform:scaleX(0.9743);text-decoration:underline;text-decoration-thickness:1.1px;text-underline-offset:1.4px;">Ev1113</span>
<svg style="left:262.00px;top:991.88px" width="40.00" height="36.00" viewBox="0 0 40 36" ><path d="M24.500 7.400C25.400 7.300 26.300 7.700 26.800 8.500L23.700 11.300L25.700 14.100L28.600 11.300L29.400 10.900C30.200 12.200 30.100 14 29 15.700C27.600 17.800 25 18.500 22.800 17.600L15.400 25.600C14.300 26.800 12.500 26.900 11.400 25.800C10.300 24.700 10.400 23.300 11.400 22.300L19.600 14.300C18.700 11.600 20.500 8 24.500 7.400Z" fill="none" stroke="#383838" stroke-width="1.45" stroke-linejoin="round" stroke-linecap="round"/></svg>
<span class="t" style="left:311.30px;top:1003.00px;font-size:17.0px;color:#343434;transform:scaleX(0.8845);">Case</span>
<span class="t" style="left:447.32px;top:1003.00px;font-size:17.0px;color:#343434;transform:scaleX(0.9811);">Unable to reset password</span>
<span class="t" style="left:740.80px;top:1003.00px;font-size:17.0px;color:#2a6e2a;transform:scaleX(0.9856);-webkit-text-stroke:0.38px currentColor;">81/100</span>
<span class="t" style="left:879.70px;top:1003.00px;font-size:17.0px;color:#343434;transform:scaleX(0.9764);">AI agent</span>
<div style="left:1048.10px;top:994.08px;width:87.60px;height:32.80px;background:#f0f9f0;border:1.3px solid #b2d8b1;border-radius:4.5px;box-sizing:border-box;"></div>
<span class="t" style="left:1055.60px;top:1004.00px;font-size:13.8px;color:#2d6a2d;transform:scaleX(1.0992);-webkit-text-stroke:0.38px currentColor;">Completed</span>
<span class="t" style="left:1237.00px;top:1003.00px;font-size:17.0px;color:#343434;transform:scaleX(1.0271);">05/22/25</span>
<span class="t" style="left:1358.00px;top:1003.00px;font-size:17.0px;color:#343434;transform:scaleX(1.0195);">05/19/25</span>
<span class="t" style="left:1511.31px;top:1003.00px;font-size:17.0px;color:#343434;transform:scaleX(0.9892);">Empathy and Understanding</span>
<div style="left:1765.80px;top:990.48px;width:37.80px;height:37.80px;background:#e8e6ea;border-radius:50%;"></div>
<span class="t" style="left:1773.30px;top:1002.00px;font-size:17.0px;color:#565656;transform:scaleX(0.9844);">AI</span>
<span class="t" style="left:1814.20px;top:1003.00px;font-size:17.0px;color:#343434;transform:scaleX(0.9640);">Case management agent</span>
<span class="t" style="left:2029.50px;top:1003.00px;font-size:17.0px;color:#343434;transform:scaleX(1.0195);">05/12/25</span>
<div style="left:52.00px;top:1036.50px;width:2102.50px;height:3.00px;background:linear-gradient(rgba(234,233,237,0),rgba(234,233,237,.95) 38%,rgba(234,233,237,.95) 62%,rgba(234,233,237,0));"></div>
</article>
<article>
<div style="left:71.60px;top:1055.00px;width:19.20px;height:19.20px;border:1.5px solid #5a5a5a;border-radius:3.5px;box-sizing:border-box;background:#fff;"></div>
<span class="t" style="left:109.57px;top:1057.00px;font-size:17.0px;color:#3560aa;transform:scaleX(0.9306);text-decoration:underline;text-decoration-thickness:1.1px;text-underline-offset:1.4px;">Ev5432</span>
<svg style="left:262.00px;top:1046.10px" width="40.00" height="36.00" viewBox="0 0 40 36" ><path d="M24.500 7.400C25.400 7.300 26.300 7.700 26.800 8.500L23.700 11.300L25.700 14.100L28.600 11.300L29.400 10.900C30.200 12.200 30.100 14 29 15.700C27.600 17.800 25 18.500 22.800 17.600L15.400 25.600C14.300 26.800 12.500 26.900 11.400 25.800C10.300 24.700 10.400 23.300 11.400 22.300L19.600 14.300C18.700 11.600 20.500 8 24.500 7.400Z" fill="none" stroke="#383838" stroke-width="1.45" stroke-linejoin="round" stroke-linecap="round"/></svg>
<span class="t" style="left:311.30px;top:1057.00px;font-size:17.0px;color:#343434;transform:scaleX(0.8845);">Case</span>
<span class="t" style="left:447.29px;top:1057.00px;font-size:17.0px;color:#343434;transform:scaleX(1.0128);">Debit card blocked without notice</span>
<span class="t" style="left:740.80px;top:1057.00px;font-size:17.0px;color:#2a6e2a;transform:scaleX(0.9856);-webkit-text-stroke:0.38px currentColor;">94/100</span>
<span class="t" style="left:879.70px;top:1057.00px;font-size:17.0px;color:#343434;transform:scaleX(0.9764);">AI agent</span>
<div style="left:1048.10px;top:1048.30px;width:87.60px;height:32.80px;background:#f0f9f0;border:1.3px solid #b2d8b1;border-radius:4.5px;box-sizing:border-box;"></div>
<span class="t" style="left:1055.60px;top:1059.00px;font-size:13.8px;color:#2d6a2d;transform:scaleX(1.0992);-webkit-text-stroke:0.38px currentColor;">Completed</span>
<span class="t" style="left:1237.00px;top:1057.00px;font-size:17.0px;color:#343434;transform:scaleX(1.0271);">06/10/25</span>
<span class="t" style="left:1358.00px;top:1057.00px;font-size:17.0px;color:#343434;transform:scaleX(1.0195);">06/09/25</span>
<span class="t" style="left:1512.30px;top:1057.00px;font-size:17.0px;color:#343434;transform:scaleX(0.9672);">System Navigation Efficiency</span>
<div style="left:1765.80px;top:1044.70px;width:37.80px;height:37.80px;background:#e8e6ea;border-radius:50%;"></div>
<span class="t" style="left:1773.30px;top:1056.00px;font-size:17.0px;color:#565656;transform:scaleX(0.9844);">AI</span>
<span class="t" style="left:1814.20px;top:1057.00px;font-size:17.0px;color:#343434;transform:scaleX(0.9640);">Case management agent</span>
<span class="t" style="left:2029.50px;top:1057.00px;font-size:17.0px;color:#343434;transform:scaleX(1.0195);">06/02/25</span>
<div style="left:52.00px;top:1090.50px;width:2102.50px;height:3.00px;background:linear-gradient(rgba(234,233,237,0),rgba(234,233,237,.95) 38%,rgba(234,233,237,.95) 62%,rgba(234,233,237,0));"></div>
</article>
<article>
<div style="left:71.60px;top:1109.22px;width:19.20px;height:19.20px;border:1.5px solid #5a5a5a;border-radius:3.5px;box-sizing:border-box;background:#fff;"></div>
<span class="t" style="left:109.55px;top:1111.00px;font-size:17.0px;color:#3560aa;transform:scaleX(0.9519);text-decoration:underline;text-decoration-thickness:1.1px;text-underline-offset:1.4px;">Ev2113</span>
<svg style="left:262.00px;top:1099.88px" width="40.00" height="36.00" viewBox="0 0 40 36" ><path d="M12.400 21.600A8.900 8.900 0 1 1 16.300 25.500L11.700 26.700C11.300 26.800 11 26.500 11.100 26.100Z" fill="none" stroke="#383838" stroke-width="1.45" stroke-linejoin="round" stroke-linecap="round"/><path d="M17.500 16H23.500M17.500 19.500H21.300" fill="none" stroke="#383838" stroke-width="1.45" stroke-linejoin="round" stroke-linecap="round"/></svg>
<span class="t" style="left:311.30px;top:1111.00px;font-size:17.0px;color:#343434;transform:scaleX(0.9313);">Chat</span>
<span class="t" style="left:448.30px;top:1111.00px;font-size:17.0px;color:#343434;transform:scaleX(0.9984);">Voicemail not working</span>
<span class="t" style="left:740.80px;top:1111.00px;font-size:17.0px;color:#2a6e2a;transform:scaleX(0.9856);-webkit-text-stroke:0.38px currentColor;">90/100</span>
<span class="t" style="left:879.70px;top:1111.00px;font-size:17.0px;color:#343434;transform:scaleX(0.9764);">AI agent</span>
<div style="left:1048.10px;top:1102.52px;width:87.60px;height:32.80px;background:#f0f9f0;border:1.3px solid #b2d8b1;border-radius:4.5px;box-sizing:border-box;"></div>
<span class="t" style="left:1055.60px;top:1113.00px;font-size:13.8px;color:#2d6a2d;transform:scaleX(1.0992);-webkit-text-stroke:0.38px currentColor;">Completed</span>
<span class="t" style="left:1237.00px;top:1111.00px;font-size:17.0px;color:#343434;transform:scaleX(1.0271);">07/18/25</span>
<span class="t" style="left:1358.00px;top:1111.00px;font-size:17.0px;color:#343434;transform:scaleX(1.0195);">07/14/25</span>
<span class="t" style="left:1511.32px;top:1111.00px;font-size:17.0px;color:#343434;transform:scaleX(0.9816);">Escalation Management effi..</span>
<svg style="left:1765.60px;top:1098.92px" width="38.00" height="38.00" viewBox="0 0 38 38" ><defs><clipPath id="av6"><circle cx="19" cy="19" r="19"/></clipPath><filter id="bl6" x="-10%" y="-10%" width="120%" height="120%"><feGaussianBlur stdDeviation="0.9"/></filter></defs><g clip-path="url(#av6)"><g filter="url(#bl6)"><rect x="-4" y="-4" width="46" height="46" fill="#7a716e"/><rect x="25" y="-4" width="18" height="46" fill="#4e4745"/>
<path d="M2 42C2 22 6 6 16 4C27 3 30 14 34 42Z" fill="#b39779"/>
<path d="M9 7C15 2.500 22 5 25 15L20 10C17 7 13 7 9 7Z" fill="#dcc7a8"/>
<path d="M4 42C4 30 5 18 9 10L11 42Z" fill="#94806f"/>
<ellipse cx="15.500" cy="17.300" rx="6.300" ry="8.600" fill="#e7bea8"/>
<ellipse cx="12.800" cy="14.300" rx="1.300" ry=".8" fill="#6b4b3d"/><ellipse cx="18.300" cy="14.300" rx="1.300" ry=".8" fill="#6b4b3d"/>
<path d="M12.300 20.300c1.500 1.800 5.200 1.800 6.600 0c-.5 2.600-2 3.600-3.300 3.600s-2.800-1-3.300-3.600z" fill="#f4ddd5"/>
<path d="M9 42C9 33 12.500 27.500 17 27.500s7.500 5.500 7.500 14.500z" fill="#dfa387"/>
<path d="M6 42C6 31 8 25 10.500 22L12.500 42Z" fill="#a46a48"/><path d="M22 42C22.500 33 22.500 28 23.500 24C27 30 30 36 31 42Z" fill="#a9754f"/></g></g></svg>
<span class="t" style="left:1813.24px;top:1111.00px;font-size:17.0px;color:#343434;transform:scaleX(0.9648);">Hazel Rodriguez</span>
<span class="t" style="left:2029.50px;top:1111.00px;font-size:17.0px;color:#343434;transform:scaleX(1.0195);">07/08/25</span>
<div style="left:52.00px;top:1144.50px;width:2102.50px;height:3.00px;background:linear-gradient(rgba(234,233,237,0),rgba(234,233,237,.95) 38%,rgba(234,233,237,.95) 62%,rgba(234,233,237,0));"></div>
</article>
<article>
<div style="left:71.60px;top:1163.44px;width:19.20px;height:19.20px;border:1.5px solid #5a5a5a;border-radius:3.5px;box-sizing:border-box;background:#fff;"></div>
<span class="t" style="left:109.57px;top:1165.00px;font-size:17.0px;color:#3560aa;transform:scaleX(0.9306);text-decoration:underline;text-decoration-thickness:1.1px;text-underline-offset:1.4px;">Ev2314</span>
<svg style="left:262.00px;top:1154.32px" width="40.00" height="36.00" viewBox="0 0 40 36" ><path d="M17.400 8.300C18.400 8.200 19.300 8.700 19.700 9.500C20.500 10.300 20.900 11.200 20.500 12.100C20.400 13 20 13.600 19.700 14L17.900 15.500C17.500 15.900 17.600 16.700 18.200 17.700C18.700 18.600 19.300 19.400 19.900 19.900C20.500 20.500 21.300 20.700 22.200 20.500L23.700 19.900C24.300 19.600 24.900 19.700 25.300 20.200L27.300 22.700C27.700 23.200 27.600 24 27.100 24.500C26.500 25.300 25.900 25.900 25.100 26.200C24.100 26.700 23.100 26.800 22.200 26.500C21.200 26.100 20.200 25.400 19.400 24.500C18 23.200 16.900 21.900 16 20.500C15.100 19.100 14.400 17.600 14 16C13.500 14.700 13.200 13.500 13.200 12.300C13.200 11.200 13.500 10.200 14.200 9.400C15 8.700 16.100 8.400 17.400 8.300Z" fill="none" stroke="#383838" stroke-width="1.45" stroke-linejoin="round" stroke-linecap="round"/></svg>
<span class="t" style="left:311.30px;top:1165.00px;font-size:17.0px;color:#343434;transform:scaleX(0.9670);">Voice call</span>
<span class="t" style="left:447.30px;top:1165.00px;font-size:17.0px;color:#343434;transform:scaleX(0.9969);">Machine Loked out of my account</span>
<span class="t" style="left:740.80px;top:1165.00px;font-size:17.0px;color:#2a6e2a;transform:scaleX(0.9856);-webkit-text-stroke:0.38px currentColor;">77/100</span>
<span class="t" style="left:879.70px;top:1165.00px;font-size:17.0px;color:#343434;transform:scaleX(0.9764);">AI agent</span>
<div style="left:1048.10px;top:1156.74px;width:87.60px;height:32.80px;background:#f0f9f0;border:1.3px solid #b2d8b1;border-radius:4.5px;box-sizing:border-box;"></div>
<span class="t" style="left:1055.60px;top:1167.00px;font-size:13.8px;color:#2d6a2d;transform:scaleX(1.0992);-webkit-text-stroke:0.38px currentColor;">Completed</span>
<span class="t" style="left:1237.00px;top:1165.00px;font-size:17.0px;color:#343434;transform:scaleX(1.0271);">08/14/25</span>
<span class="t" style="left:1358.00px;top:1165.00px;font-size:17.0px;color:#343434;transform:scaleX(1.0195);">08/13/25</span>
<span class="t" style="left:1511.35px;top:1165.00px;font-size:17.0px;color:#343434;transform:scaleX(0.9514);">Data Privacy</span>
<svg style="left:1765.60px;top:1153.14px" width="38.00" height="38.00" viewBox="0 0 38 38" ><defs><clipPath id="av7"><circle cx="19" cy="19" r="19"/></clipPath><filter id="bl7" x="-10%" y="-10%" width="120%" height="120%"><feGaussianBlur stdDeviation="0.9"/></filter></defs><g clip-path="url(#av7)"><g filter="url(#bl7)"><rect x="-4" y="-4" width="46" height="46" fill="#1d1418"/>
<rect x="-4" y="15.500" width="46" height="13" fill="#ada090"/><rect x="-4" y="19" width="9" height="6" fill="#6a5f54"/><rect x="33" y="16" width="9" height="9" fill="#7d776c"/>
<rect x="28" y="8.500" width="5.500" height="3.200" rx="1" fill="#f6f0f0"/>
<path d="M-2 42C-1 33 5 29 12 28h15c7 1 12 5 13 14z" fill="#231d22"/>
<path d="M26 29c5 1 9 4 11 9l-4 4h-8z" fill="#1f1e2b"/>
<path d="M13 27h13l-1.500 15h-10z" fill="#b07d68"/>
<ellipse cx="19.500" cy="18.500" rx="8.700" ry="11.800" fill="#c18e78"/>
<path d="M9.800 14.500C9.500 6 14 2.500 19.500 2.500S29.500 6 29.200 14.500C27.500 9.500 24 8 19.500 8S11.500 9.500 9.800 14.500Z" fill="#120d0d"/>
<ellipse cx="15" cy="14" rx="2.600" ry="1.200" fill="#6a4740"/><ellipse cx="23.500" cy="14" rx="2.600" ry="1.200" fill="#6a4740"/>
<ellipse cx="19.500" cy="22.800" rx="4.700" ry="1.900" fill="#f3d0c8"/></g></g></svg>
<span class="t" style="left:1814.20px;top:1165.00px;font-size:17.0px;color:#343434;transform:scaleX(0.9398);">Graham Barnes</span>
<span class="t" style="left:2029.50px;top:1165.00px;font-size:17.0px;color:#343434;transform:scaleX(1.0195);">08/04/25</span>
<div style="left:52.00px;top:1198.50px;width:2102.50px;height:3.00px;background:linear-gradient(rgba(234,233,237,0),rgba(234,233,237,.95) 38%,rgba(234,233,237,.95) 62%,rgba(234,233,237,0));"></div>
</article>
<article>
<div style="left:71.60px;top:1217.66px;width:19.20px;height:19.20px;border:1.5px solid #5a5a5a;border-radius:3.5px;box-sizing:border-box;background:#fff;"></div>
<span class="t" style="left:109.57px;top:1219.00px;font-size:17.0px;color:#3560aa;transform:scaleX(0.9306);text-decoration:underline;text-decoration-thickness:1.1px;text-underline-offset:1.4px;">Ev4359</span>
<svg style="left:262.00px;top:1208.54px" width="40.00" height="36.00" viewBox="0 0 40 36" ><path d="M17.400 8.300C18.400 8.200 19.300 8.700 19.700 9.500C20.500 10.300 20.900 11.200 20.500 12.100C20.400 13 20 13.600 19.700 14L17.900 15.500C17.500 15.900 17.600 16.700 18.200 17.700C18.700 18.600 19.300 19.400 19.900 19.900C20.500 20.500 21.300 20.700 22.200 20.500L23.700 19.900C24.300 19.600 24.900 19.700 25.300 20.200L27.300 22.700C27.700 23.200 27.600 24 27.100 24.500C26.500 25.300 25.900 25.900 25.100 26.200C24.100 26.700 23.100 26.800 22.200 26.500C21.200 26.100 20.200 25.400 19.400 24.500C18 23.200 16.900 21.900 16 20.500C15.100 19.100 14.400 17.600 14 16C13.500 14.700 13.200 13.500 13.200 12.300C13.200 11.200 13.500 10.200 14.200 9.400C15 8.700 16.100 8.400 17.400 8.300Z" fill="none" stroke="#383838" stroke-width="1.45" stroke-linejoin="round" stroke-linecap="round"/></svg>
<span class="t" style="left:311.30px;top:1219.00px;font-size:17.0px;color:#343434;transform:scaleX(0.9670);">Voice call</span>
<span class="t" style="left:448.30px;top:1219.00px;font-size:17.0px;color:#343434;transform:scaleX(0.9762);">Stolen credit card</span>
<span class="t" style="left:740.80px;top:1219.00px;font-size:17.0px;color:#a8222e;transform:scaleX(0.9856);-webkit-text-stroke:0.38px currentColor;">62/100</span>
<span class="t" style="left:879.70px;top:1219.00px;font-size:17.0px;color:#343434;transform:scaleX(0.9764);">AI agent</span>
<div style="left:1048.10px;top:1210.96px;width:87.60px;height:32.80px;background:#f0f9f0;border:1.3px solid #b2d8b1;border-radius:4.5px;box-sizing:border-box;"></div>
<span class="t" style="left:1055.60px;top:1221.00px;font-size:13.8px;color:#2d6a2d;transform:scaleX(1.0992);-webkit-text-stroke:0.38px currentColor;">Completed</span>
<span class="t" style="left:1237.00px;top:1219.00px;font-size:17.0px;color:#343434;transform:scaleX(1.0271);">09/19/25</span>
<span class="t" style="left:1358.00px;top:1219.00px;font-size:17.0px;color:#343434;transform:scaleX(1.0195);">09/18/25</span>
<span class="t" style="left:1512.30px;top:1219.00px;font-size:17.0px;color:#343434;transform:scaleX(0.9682);">Security Adherence</span>
<svg style="left:1765.60px;top:1207.36px" width="38.00" height="38.00" viewBox="0 0 38 38" ><defs><clipPath id="av8"><circle cx="19" cy="19" r="19"/></clipPath><filter id="bl8" x="-10%" y="-10%" width="120%" height="120%"><feGaussianBlur stdDeviation="0.9"/></filter></defs><g clip-path="url(#av8)"><g filter="url(#bl8)"><rect x="-4" y="-4" width="46" height="46" fill="#a2a9b7"/><rect x="-4" y="-4" width="13" height="46" fill="#d6933a"/><rect x="9" y="-4" width="10" height="16" fill="#e9e3db"/>
<rect x="26" y="13" width="16" height="10" fill="#8fa6c8"/><rect x="28" y="19" width="14" height="3" fill="#c08a6c"/><rect x="24" y="24" width="18" height="18" fill="#98a4b8"/>
<path d="M-2 42L1 26C5 23 9 24 12 27L19 42Z" fill="#a8875c"/>
<path d="M12 28l5 3-2 11h-3z" fill="#dba392"/>
<path d="M16.500 28.500h4.500l1 13.500h-5.500z" fill="#7a2436"/>
<ellipse cx="19" cy="19" rx="7.200" ry="9.300" fill="#c98b64"/>
<path d="M11.500 14.500C11.500 8 15 5.500 19.500 5.500S27.500 8 27 13C25 10 22.500 9.500 19.500 9.500S13.500 10.500 11.500 14.500Z" fill="#2b2421"/>
<path d="M11.800 20c.7 7 3.500 10.500 7.200 10.500s6.500-3.500 7.200-10.500c-2 3.500-4.200 4.500-7.200 4.500s-5.200-1-7.200-4.500z" fill="#4a342c"/>
<path d="M12.500 17.500h5.800M20.300 17.500h6" stroke="#2a2220" stroke-width="1.200" fill="none"/>
<path d="M16.500 24.500c1.500.8 3.500.8 5 0" stroke="#b86a58" stroke-width="1" fill="none"/></g></g></svg>
<span class="t" style="left:1814.20px;top:1219.00px;font-size:17.0px;color:#343434;transform:scaleX(0.9465);">Oscar Ward</span>
<span class="t" style="left:2029.50px;top:1219.00px;font-size:17.0px;color:#343434;transform:scaleX(1.0195);">08/24/25</span>
<div style="left:52.00px;top:1253.50px;width:2102.50px;height:3.00px;background:linear-gradient(rgba(234,233,237,0),rgba(234,233,237,.95) 38%,rgba(234,233,237,.95) 62%,rgba(234,233,237,0));"></div>
</article>
<div style="left:1765.70px;top:1261.60px;width:37.80px;height:37.80px;background:#e8e6ea;border-radius:50%;"></div>
</section>
</main>
<svg style="left:568.00px;top:784.00px" width="40.00" height="56.00" viewBox="0 0 40 56" ><path d="M6.900 7.400 V42.400 L15.900 34 L22.200 49.700 L27.600 47.300 L20.400 31.700 L33 30.400 Z" fill="#fff" stroke="#000" stroke-width="2.100" stroke-linejoin="miter"/></svg>
</div></body></html>
